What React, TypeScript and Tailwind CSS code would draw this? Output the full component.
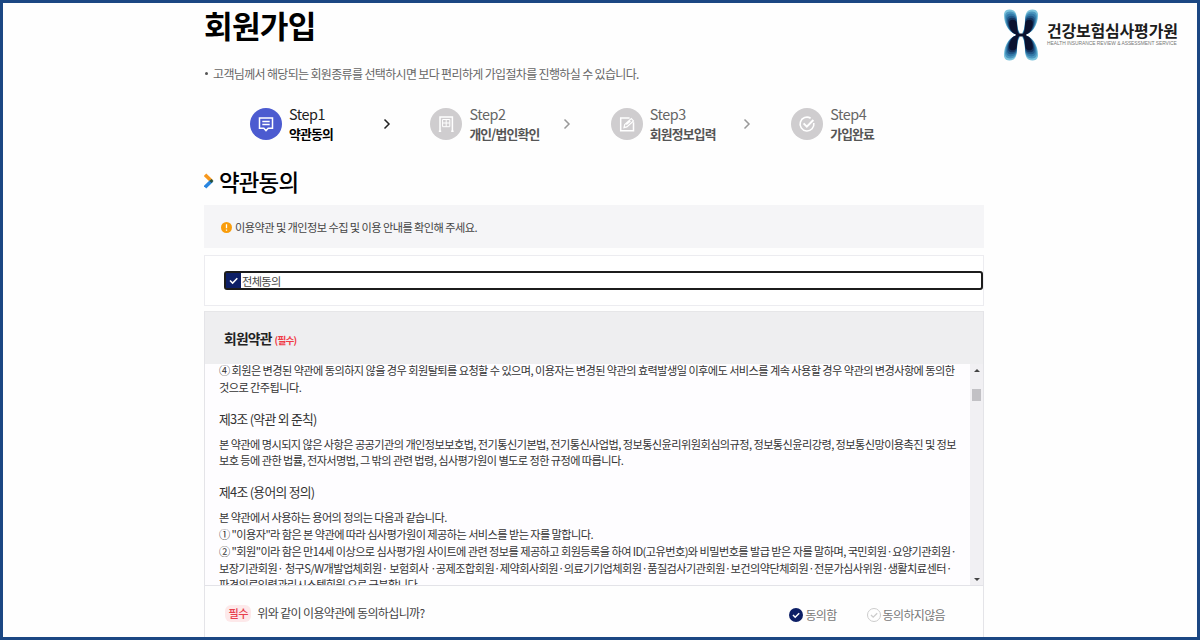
import React from 'react'

const steps = [
  { step: 'Step1', label: '약관동의', icon: 'chat' },
  { step: 'Step2', label: '개인/법인확인', icon: 'door' },
  { step: 'Step3', label: '회원정보입력', icon: 'edit' },
  { step: 'Step4', label: '가입완료', icon: 'check' },
]

const terms = [
  {
    title: '',
    lines: [
      '④ 회원은 변경된 약관에 동의하지 않을 경우 회원탈퇴를 요청할 수 있으며, 이용자는 변경된 약관의 효력발생일 이후에도 서비스를 계속 사용할 경우 약관의 변경사항에 동의한',
      '것으로 간주됩니다.',
    ],
  },
  {
    title: '제3조 (약관 외 준칙)',
    lines: [
      '본 약관에 명시되지 않은 사항은 공공기관의 개인정보보호법, 전기통신기본법, 전기통신사업법, 정보통신윤리위원회심의규정, 정보통신윤리강령, 정보통신망이용촉진 및 정보',
      '보호 등에 관한 법률, 전자서명법, 그 밖의 관련 법령, 심사평가원이 별도로 정한 규정에 따릅니다.',
    ],
  },
  {
    title: '제4조 (용어의 정의)',
    lines: [
      '본 약관에서 사용하는 용어의 정의는 다음과 같습니다.',
      '① "이용자"라 함은 본 약관에 따라 심사평가원이 제공하는 서비스를 받는 자를 말합니다.',
      '② "회원"이라 함은 만14세 이상으로 심사평가원 사이트에 관련 정보를 제공하고 회원등록을 하여 ID(고유번호)와 비밀번호를 발급 받은 자를 말하며, 국민회원·요양기관회원·',
      '보장기관회원· 청구S/W개발업체회원· 보험회사 ·공제조합회원·제약회사회원·의료기기업체회원·품질검사기관회원·보건의약단체회원·전문가심사위원·생활치료센터·',
      '파견의료인력관리시스템회원 으로 구분합니다.',
    ],
  },
]

const lobes = [
  { scale: 1, color: '#7cc3dc' },
  { scale: 0.92, color: '#4b97bf' },
  { scale: 0.84, color: '#3379a8' },
  { scale: 0.76, color: '#225888' },
  { scale: 0.68, color: '#153560' },
  { scale: 0.6, color: '#0b1230' },
]

const StepIcon = ({ name }: { name: string }) => (
  <svg viewBox="0 0 32 32" className="size-8" fill="none" stroke="#fff" strokeWidth="1.5">
    {name === 'chat' && <path d="M9.500 10h13v10.200h-4.300L16 22.600l-2.200-2.400H9.500zM12.300 13.400h7.400M12.300 16.600h7.400" />}
    {name === 'door' && (
      <>
        <path d="M10 23.500V9h12.400v14.500M8.800 23.300h2.400M21.200 23.300h2.400" />
        <path d="M12.600 11.500h7.200v7.200h-7.200zM16.200 11.500v7.200M12.600 15h7.200" strokeWidth="1" />
      </>
    )}
    {name === 'edit' && (
      <>
        <path d="M18.600 10H9.700v12.800h12.800v-8.600" />
        <path d="M13 19.600l.7-3 6.600-6 2.200 2.300-6.600 6zM15.400 16.600l4-3.600" strokeWidth="1.2" />
      </>
    )}
    {name === 'check' && (
      <>
        <path d="M19.600 10.200A6.900 6.900 0 1 0 22.800 15" strokeWidth="1.6" />
        <path d="M12.600 15.400l3.200 3.200 6.600-6.600" strokeWidth="2" />
      </>
    )}
  </svg>
)

const Lobe = ({ transform }: { transform?: string }) => (
  <g transform={transform}>
    {lobes.map((l) => (
      <path
        key={l.color}
        transform={`translate(14 26) scale(${l.scale}) translate(-14 -26)`}
        d="M1.200 4C2 .3 7-.3 10.500 1.500c2.800 1.800 3.300 5.500 3.500 9.500.1 5 .5 9 2.500 12.500v2.500c-3-.3-8-1.500-11.500-6.500C1.800 15 .3 8 1.200 4z"
        fill={l.color}
      />
    ))}
  </g>
)

const Logo = () => (
  <svg viewBox="0 0 36 52" className="w-9 h-[52px]">
    <Lobe />
    <Lobe transform="translate(36 0) scale(-1 1)" />
    <Lobe transform="translate(0 52) scale(1 -1)" />
    <Lobe transform="translate(36 52) scale(-1 -1)" />
    <path d="M13 26h10" stroke="#0b1230" strokeWidth="3" />
  </svg>
)

const App = () => {
  return (
    <div className="relative w-[1200px] h-[640px] overflow-hidden border-[3px] border-[#1b4783] bg-[#fefefe] tracking-[-0.8px] font-['Noto_Sans_CJK_KR',sans-serif] text-[#333]">
      {/* 기관 로고 */}
      <div className="absolute top-[6px] right-[18px] flex">
        <Logo />
        <div className="ml-2 mt-[11px] w-[132px] whitespace-nowrap">
          <p className="text-base leading-[20px] font-bold tracking-[-0.2px] text-[#1c1c1c]">건강보험심사평가원</p>
          <p className="mt-px text-[4.87px] leading-[6px] tracking-[-0.02px] text-[#777] font-['Liberation_Sans',sans-serif]">HEALTH INSURANCE REVIEW &amp; ASSESSMENT SERVICE</p>
        </div>
      </div>

      <main className="ml-[201px] w-[780px] whitespace-nowrap">
        <h1 className="pt-[6px] text-[31.2px] leading-[32px] font-bold text-black">회원가입</h1>
        <p className="mt-[24px] flex items-center text-xs leading-[17px] tracking-[-0.66px] text-[#666]">
          <span className="mr-[5px] ml-px size-[3px] rounded-full bg-[#555]" />
          고객님께서 해당되는 회원종류를 선택하시면 보다 편리하게 가입절차를 진행하실 수 있습니다.
        </p>

        {/* 가입 단계 */}
        <ol className="mt-[22px] ml-[46px] flex">
          {steps.map((s, i) => (
            <li key={s.step} className="flex w-[180.4px] items-center">
              <span className={i === 0 ? 'rounded-full bg-[#4c5bd0]' : 'rounded-full bg-[#cfcdcf]'}>
                <StepIcon name={s.icon} />
              </span>
              <div className={i === 0 ? 'ml-[7px] w-[93.5px] text-[#222]' : 'ml-[7px] w-[93.5px] text-[#666]'}>
                <p className="text-[14.4px] leading-[20px] tracking-[-0.03em]">{s.step}</p>
                <p className={i === 0 ? 'text-[12.8px] leading-[20px] font-bold text-black' : 'text-[12.8px] leading-[20px] font-bold text-[#555]'}>{s.label}</p>
              </div>
              {i < 3 && (
                <svg viewBox="0 0 8 12" className="w-2 h-3" fill="none" stroke={i === 0 ? '#222' : '#999'} strokeWidth="1.5">
                  <path d="M1.500 1.500L6 6l-4.500 4.500" />
                </svg>
              )}
            </li>
          ))}
        </ol>

        <h2 className="mt-[22px] flex items-center text-[22.4px] leading-[30px] font-medium text-black">
          <svg viewBox="0 0 10 16" className="mr-[5px] w-[10px] h-4" fill="none" strokeWidth="3.600">
            <path d="M1 1.800L7.500 8" stroke="#f7981d" />
            <path d="M1 14.200L7.500 8" stroke="#2a86e0" />
            <path d="M5.500 8l2-2L9.500 8l-2 2z" fill="#23503c" strokeWidth="0" />
          </svg>
          약관동의
        </h2>

        <div className="mt-[9px] flex h-[43px] items-center bg-[#f5f5f7] pt-px pl-[17px] text-[11.2px] tracking-[-0.56px] text-[#444]">
          <svg viewBox="0 0 11 11" className="mr-[3px] size-[11px]">
            <circle cx="5.500" cy="5.500" r="5.500" fill="#f99d0b" />
            <path d="M5.500 2.300v4M5.500 7.500v1.300" stroke="#fff" strokeWidth="1.300" />
          </svg>
          이용약관 및 개인정보 수집 및 이용 안내를 확인해 주세요.
        </div>

        {/* 전체동의 */}
        <div className="mt-[7px] h-[51px] border border-[#ececf0] bg-white pt-[15px] pl-[19px]">
          <label className="flex h-[19px] items-center rounded-[3px] border-2 border-[#1c1c1c] text-[11.2px] tracking-[-0.65px] text-[#444]">
            <svg viewBox="0 0 15 15" className="mr-px size-[15px] bg-[#0d1f66]" fill="none">
              <path d="M4 7.500l2.600 2.600L11.300 5.300" stroke="#fff" strokeWidth="1.500" />
            </svg>
            <span className="mt-[2px]">전체동의</span>
          </label>
        </div>

        <section className="mt-[5px] border-x border-[#e4e4e8]">
          <h3 className="flex h-[53px] items-center border-t border-[#e6e6e8] bg-[#eeeef0] pt-px pl-[19px] text-[13.8px] font-bold text-[#222]">
            회원약관
            <span className="mt-[4px] ml-[3px] text-[9.6px] text-[#f03c46]">(필수)</span>
          </h3>

          <div className="flex h-[222px] overflow-hidden border-b border-[#e3e3e8] bg-[#fefdff]">
            <div className="-mt-[2px] w-[765px] pl-[14px] text-[11.2px] leading-[16.8px] tracking-[-0.58px] text-[#333]">
              {terms.map((t) => (
                <div key={t.title} className="mb-[14px]">
                  {t.title && <h4 className="mb-[8px] text-[12.8px] leading-[18px] tracking-[-0.7px]">{t.title}</h4>}
                  {t.lines.map((line) => (
                    <p key={line}>{line}</p>
                  ))}
                </div>
              ))}
            </div>
            <div className="flex w-[13px] shrink-0 flex-col items-center bg-[#f1f0f3]">
              <span className="mt-[5px] border-x-[3px] border-b-[3px] border-x-transparent border-b-[#444]" />
              <span className="mt-[17px] h-[12px] w-[9px] bg-[#c2c1c5]" />
              <span className="mt-auto mb-[4px] border-x-[3px] border-t-[3px] border-x-transparent border-t-[#444]" />
            </div>
          </div>

          <div className="flex h-[54px] items-center pl-[20px] text-xs tracking-[-0.64px] text-[#444]">
            <span className="mr-[6px] rounded-[6px] bg-[#fde9ea] px-[3.5px] text-[11.2px] leading-[17px] font-medium text-[#e8404c]">필수</span>
            위와 같이 이용약관에 동의하십니까?
            <div className="mt-[3px] mr-[38px] ml-auto flex items-center gap-[30px] text-[#777]">
              <span className="flex items-center gap-[2px]">
                <svg viewBox="0 0 14 14" className="size-[14px]" fill="none">
                  <circle cx="7" cy="7" r="7" fill="#0d1f66" />
                  <path d="M4 7l2.200 2.200L10.200 5.200" stroke="#fff" strokeWidth="1.500" />
                </svg>
                동의함
              </span>
              <span className="flex items-center gap-[2px]">
                <svg viewBox="0 0 14 14" className="size-[14px]" fill="none" stroke="#ccc">
                  <circle cx="7" cy="7" r="6.500" />
                  <path d="M4 7l2.200 2.200L10.200 5.200" strokeWidth="1.300" />
                </svg>
                동의하지않음
              </span>
            </div>
          </div>
        </section>
      </main>
    </div>
  )
}

export default App
